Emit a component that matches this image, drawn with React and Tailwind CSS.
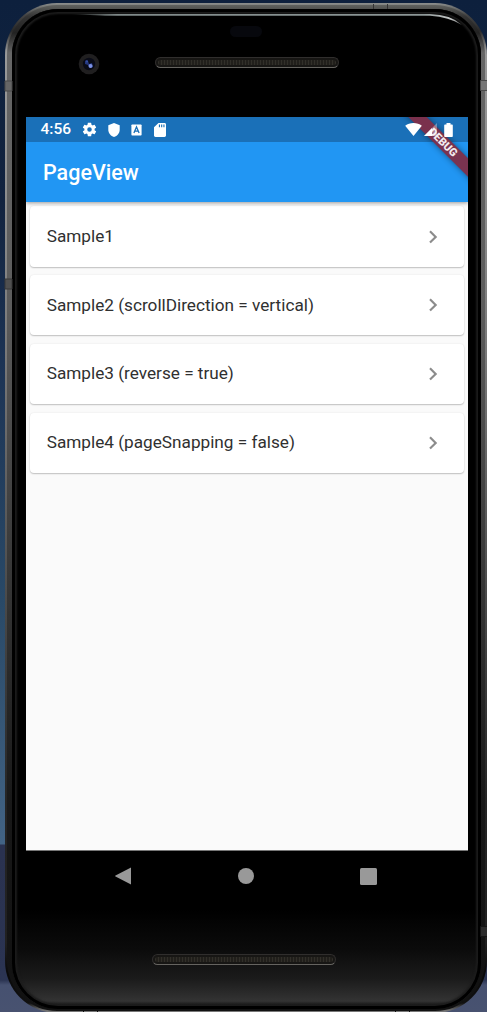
import React from "react";

const samples = [
  "Sample1",
  "Sample2 (scrollDirection = vertical)",
  "Sample3 (reverse = true)",
  "Sample4 (pageSnapping = false)",
];

function StatusBar() {
  return (
    <div className="flex h-[25px] shrink-0 items-center justify-between bg-[#1a70b8] pl-[14.500px] pr-[15.500px] text-white">
      <div className="flex items-center gap-[10.300px]">
        <span className="w-[30px] pt-[1px] text-[15.500px] font-medium leading-none whitespace-nowrap">4:56</span>
        <svg className="size-[17px]" viewBox="0 0 24 24" fill="currentColor">
          <path d="M19.14 12.94c.04-.3.06-.61.06-.94 0-.32-.02-.64-.07-.94l2.03-1.58a.49.49 0 0 0 .12-.61l-1.92-3.32a.488.488 0 0 0-.59-.22l-2.39.96c-.5-.38-1.03-.7-1.62-.94l-.36-2.54a.484.484 0 0 0-.48-.41h-3.84c-.24 0-.43.17-.47.41l-.36 2.54c-.59.24-1.13.57-1.62.94l-2.39-.96c-.22-.08-.47 0-.59.22L2.74 8.87c-.12.21-.08.47.12.61l2.03 1.58c-.05.3-.09.63-.09.94s.02.64.07.94l-2.03 1.58a.49.49 0 0 0-.12.61l1.92 3.32c.12.22.37.29.59.22l2.39-.96c.5.38 1.03.7 1.62.94l.36 2.54c.05.24.24.41.48.41h3.84c.24 0 .44-.17.47-.41l.36-2.54c.59-.24 1.13-.56 1.62-.94l2.39.96c.22.08.47 0 .59-.22l1.92-3.32c.12-.22.07-.47-.12-.61l-2.01-1.58zM12 15.2A3.2 3.2 0 0 1 8.800 12 3.2 3.2 0 0 1 12 8.800 3.2 3.2 0 0 1 15.200 12 3.2 3.2 0 0 1 12 15.200z" />
        </svg>
        <svg className="h-[14px] w-[12px]" viewBox="0 0 12 13" preserveAspectRatio="none" fill="currentColor">
          <path d="M6 0 .3 2v4.300C.3 9.700 2.800 12 6 13c3.200-1 5.700-3.300 5.700-6.700V2z" />
        </svg>
        <svg className="ml-[1px] h-[12px] w-[11px]" viewBox="0 0 11 12" fill="none">
          <rect x=".4" y=".5" width="10.200" height="11" rx=".8" fill="white" />
          <path d="M2.900 9 5.500 3 8.100 9M3.800 7.200h3.400" stroke="#1a70b8" strokeWidth="1.300" />
        </svg>
        <svg className="ml-[1.500px] h-[14px] w-[12px]" viewBox="4 2 16 20" preserveAspectRatio="none" fill="currentColor">
          <path d="M18 2h-8L4.020 8 4 20c0 1.100.9 2 2 2h12c1.100 0 2-.9 2-2V4c0-1.100-.9-2-2-2zm-6 6h-1.500V4H12v4zm3 0h-1.500V4H15v4zm3 0h-1.500V4H18v4z" />
        </svg>
      </div>
      <div className="relative z-20 flex items-center">
        <svg className="h-[13px] w-[17px]" viewBox="0 0 17 13" fill="currentColor">
          <path d="M8.500 13 .2 2.700C2.500 1 5.300 0 8.500 0s6 1 8.300 2.700z" />
        </svg>
        <svg className="ml-[2px] size-[13px]" viewBox="0 0 13 13" fill="currentColor">
          <path d="M0 13 13 0v13z" opacity=".35" />
          <path d="M0 13 8 5v8z" />
        </svg>
        <svg className="ml-[7px] h-[14px] w-[9px]" viewBox="0 0 9 14" fill="currentColor">
          <path d="M2.500 0h4v1.500H8q.8 0 .8.8v10.900q0 .8-.8.8H1q-.8 0-.8-.8V2.300q0-.8.8-.8h1.500z" />
        </svg>
      </div>
    </div>
  );
}

function SampleCard({ label }) {
  return (
    <div className="flex h-[60.200px] items-center rounded-[4px] bg-white pl-[16.700px] pr-[17.800px] shadow-[0_1px_1.500px_rgba(0,0,0,0.22),0_0_2px_rgba(0,0,0,0.08)]">
      <span className="flex-1 text-[17.200px] leading-none text-[#303030]">{label}</span>
      <svg className="size-[25.800px] fill-[#8c8c8c]" viewBox="0 0 24 24">
        <path d="M10 6 8.590 7.410 13.170 12l-4.580 4.590L10 18l6-6z" />
      </svg>
    </div>
  );
}

function Screen() {
  return (
    <div className="flex h-[734px] w-[442px] shrink-0 flex-col overflow-hidden border-b border-[#777] bg-[#fafafa]">
      <div className="relative z-10 shrink-0 shadow-[0_1px_4px_rgba(0,0,0,0.4)]">
        <StatusBar />
        <div className="flex h-[60px] items-center bg-[#2196f3] pl-[17px] pt-[1px] text-[21.500px] font-medium leading-none text-white">
          PageView
        </div>
        <div className="absolute -right-[34.500px] top-[19px] z-10 flex h-[13px] w-[120px] rotate-45 items-center justify-center bg-[#802d47]/95 text-[11px] font-black leading-none text-white/90 shadow-[0_0_6px_rgba(0,0,0,0.45)]">
          DEBUG
        </div>
      </div>
      <div className="flex flex-col gap-[8.600px] px-[4.000px] pt-[4.400px]">
        {samples.map((s) => (
          <SampleCard key={s} label={s} />
        ))}
      </div>
    </div>
  );
}

function Grille() {
  return (
    <div className="h-[11px] w-[184px] rounded-full border border-[#302e2d] border-b-[#666460] bg-[#171614] p-[2px]">
      <div className="h-full rounded-full bg-[repeating-linear-gradient(90deg,#312f29_0px,#312f29_1px,#211f1b_1px,#211f1b_3px)]" />
    </div>
  );
}

function TopBezel() {
  return (
    <div className="flex h-[108px] w-full shrink-0 flex-col pt-[17px]">
      <div className="ml-[218px] h-[11px] w-[32px] rounded-full bg-[#07080d]" />
      <div className="flex items-start gap-[55px] pl-[66px] pt-[16px]">
        <svg className="size-[22px]" viewBox="0 0 22 22">
          <circle cx="11" cy="11" r="10.300" fill="#201f20" />
          <circle cx="11" cy="11" r="6.200" fill="#090b17" />
          <path d="M7 8q2-2 3 0l1 3 3-1 1 4-3 1-2-3-3-1z" fill="#23367c" />
          <circle cx="12.500" cy="13" r="2" fill="#7d92e5" />
          <circle cx="9" cy="8.500" r="1" fill="#3550a4" />
        </svg>
        <div className="pt-[4px]">
          <Grille />
        </div>
      </div>
    </div>
  );
}

function NavBar() {
  return (
    <div className="flex h-[50px] w-[442px] shrink-0 items-center justify-between pl-[88px] pr-[91px]">
      <svg className="h-[18px] w-[17px]" viewBox="0 0 17 18" fill="#999">
        <path d="M17 .5v17L1.500 9.600q-.9-.6 0-1.200z" />
      </svg>
      <div className="size-[16px] rounded-full bg-[#999]" />
      <div className="size-[17px] rounded-[1.500px] bg-[#999]" />
    </div>
  );
}

function FrameDetails() {
  return (
    <svg className="pointer-events-none absolute inset-0 size-full" viewBox="0 0 487 1012" fill="none">
      <defs>
        <linearGradient id="glint" gradientUnits="userSpaceOnUse" x1="70" y1="0" x2="463" y2="0">
          <stop stopColor="#8d9797" stopOpacity="0" />
          <stop offset=".12" stopColor="#7f8989" />
          <stop offset=".9" stopColor="#8d9797" />
          <stop offset=".97" stopColor="#c5c8c8" />
          <stop offset="1" stopColor="#555" />
        </linearGradient>
      </defs>
      <path d="M70 14H430Q451 14.500 462 25Q449 17 430 15.800H105z" fill="url(#glint)" />
      <g strokeWidth="1">
        <path d="M5 81h7v10H5z" fill="#666" stroke="#4a4a4a" />
        <path d="M5 279h7v10H5z" fill="#505050" stroke="#383838" />
        <path d="M480.500 80.500h7v10h-7z" fill="#777" stroke="#4a4a4a" />
        <path d="M480.500 926.500h7v10h-7z" fill="#2c2c2c" stroke="#141414" />
        <path d="M373.500 4v5M387.500 4v5" stroke="#333" />
        <path d="M83.500 1009v3M97.500 1009v3M395.500 1009v3M409.500 1009v3" stroke="#111" />
      </g>
    </svg>
  );
}

export default function App() {
  return (
    <div className="relative h-[1012px] w-[487px] overflow-hidden bg-[linear-gradient(180deg,#0d203d_0px,#12233f_200px,#1c3354_360px,#294967_600px,#426384_844px,#2a3250_845px,#2b3452_980px,#465170_985px,#485270_1012px)] pl-[5px] pt-[3px] font-['Roboto','Noto_Sans',sans-serif]">
      <div className="h-[1010px] w-[482px] rounded-[52px] bg-[linear-gradient(180deg,#8b8e8c_0px,#444_12px,#282828_28px,#999_48px,#8c8c8c_200px,#777_360px,#494949_600px,#242424_800px,#202020_940px,#080808_970px,#111_1000px,#777_1008px)] px-[2px] pt-[2px] pb-[2px]">
        <div className="h-full rounded-[50px] bg-[linear-gradient(180deg,#60625f_0px,#333_12px,#222_28px,#666_48px,#5c5c5c_300px,#333_600px,#181818_800px,#111_1000px)] pl-[5px] pr-[4px] pt-[4px] pb-[2px]">
          <div className="flex h-full flex-col rounded-[46px] bg-[linear-gradient(180deg,#000_0,#000_900px,#0b0b0b_940px,#1b1b1b_970px,#333_992px,#101010_998px)] shadow-[inset_0_0_0_3px_#000,inset_0_0_2px_5px_#1c1c1c]">
            <TopBezel />
            <div className="pl-[14px]">
              <Screen />
              <NavBar />
            </div>
            <div className="pl-[140px] pt-[53px]">
              <Grille />
            </div>
          </div>
        </div>
      </div>
      <FrameDetails />
    </div>
  );
}
